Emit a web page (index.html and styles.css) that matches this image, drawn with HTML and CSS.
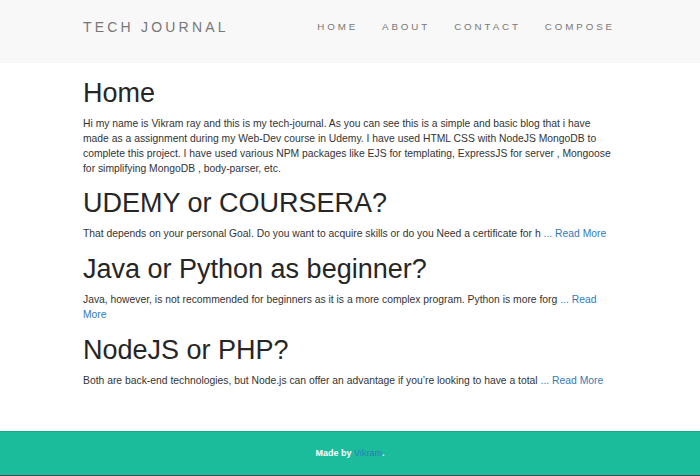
FILE: index.html
```html
<!DOCTYPE html>
<html lang="en">
<head>
<meta charset="utf-8">
<title>Tech Journal</title>
<link rel="stylesheet" href="styles.css">
</head>
<body>
<nav class="navbar">
  <div class="container nav-inner">
    <a class="brand" href="#">TECH JOURNAL</a>
    <ul class="nav-links">
      <li><a href="#">HOME</a></li>
      <li><a href="#">ABOUT</a></li>
      <li><a href="#">CONTACT</a></li>
      <li><a href="#">COMPOSE</a></li>
    </ul>
  </div>
</nav>
<main class="container content">
  <h1>Home</h1>
  <p>Hi my name is Vikram ray and this is my tech-journal. As you can see this is a simple and basic blog that i have made as a assignment during my Web-Dev course in Udemy. I have used HTML CSS with NodeJS MongoDB to complete this project. I have used various NPM packages like EJS for templating, ExpressJS for server , Mongoose for simplifying MongoDB , body-parser, etc.</p>
  <h1>UDEMY or COURSERA?</h1>
  <p>That depends on your personal Goal. Do you want to acquire skills or do you Need a certificate for h <a href="#">... Read More</a></p>
  <h1>Java or Python as beginner?</h1>
  <p>Java, however, is not recommended for beginners as it is a more complex program. Python is more forg <a href="#">... Read More</a></p>
  <h1>NodeJS or PHP?</h1>
  <p>Both are back-end technologies, but Node.js can offer an advantage if you’re looking to have a total <a href="#">... Read More</a></p>
</main>
<footer class="footer">
  <p>Made by <a href="#">Vikram</a>.</p>
</footer>
</body>
</html>
```
FILE: styles.css
```css
* { box-sizing: border-box; }
html, body { margin: 0; padding: 0; }
body {
  font-family: "Liberation Sans", Arial, sans-serif;
  font-size: 10.35px;
  line-height: 15px;
  color: #333;
  background: #fff;
  min-height: 100vh;
  display: flex;
  flex-direction: column;
}
a { color: #337ab7; text-decoration: none; }
.container {
  width: 534px;
  margin: 0 auto;
}
.navbar {
  background: #f8f8f8;
  height: 63px;
  padding-top: 17px;
}
.nav-inner {
  display: flex;
  justify-content: space-between;
  align-items: center;
  height: 20px;
}
.brand {
  color: #777;
  font-size: 14px;
  letter-spacing: 3.2px;
  line-height: 20px;
}
.nav-links {
  list-style: none;
  margin: 0 -10px 0 0;
  padding: 0;
  display: flex;
}
.nav-links a {
  display: block;
  color: #777;
  font-size: 9.75px;
  letter-spacing: 2.9px;
  line-height: 20px;
  padding: 0 12px;
}
.content { padding-top: 2px; padding-right: 3px; }
.content h1 {
  font-size: 27px;
  font-weight: 500;
  line-height: 1.1;
  color: #262626;
  margin: 13.5px 0 7.5px;
}
.content p {
  margin: 0 0 7.5px;
}
.footer {
  margin-top: auto;
  background: #1abc9c;
  height: 45px;
  border-top: 1px solid #17a98c;
  border-bottom: 1px solid #4a4a4a;
  display: flex;
  align-items: center;
  justify-content: center;
}
.footer p {
  margin: 0;
  color: #fff;
  font-size: 9px;
  font-weight: bold;
}
.footer a { color: #337ab7; font-weight: normal; }
```
